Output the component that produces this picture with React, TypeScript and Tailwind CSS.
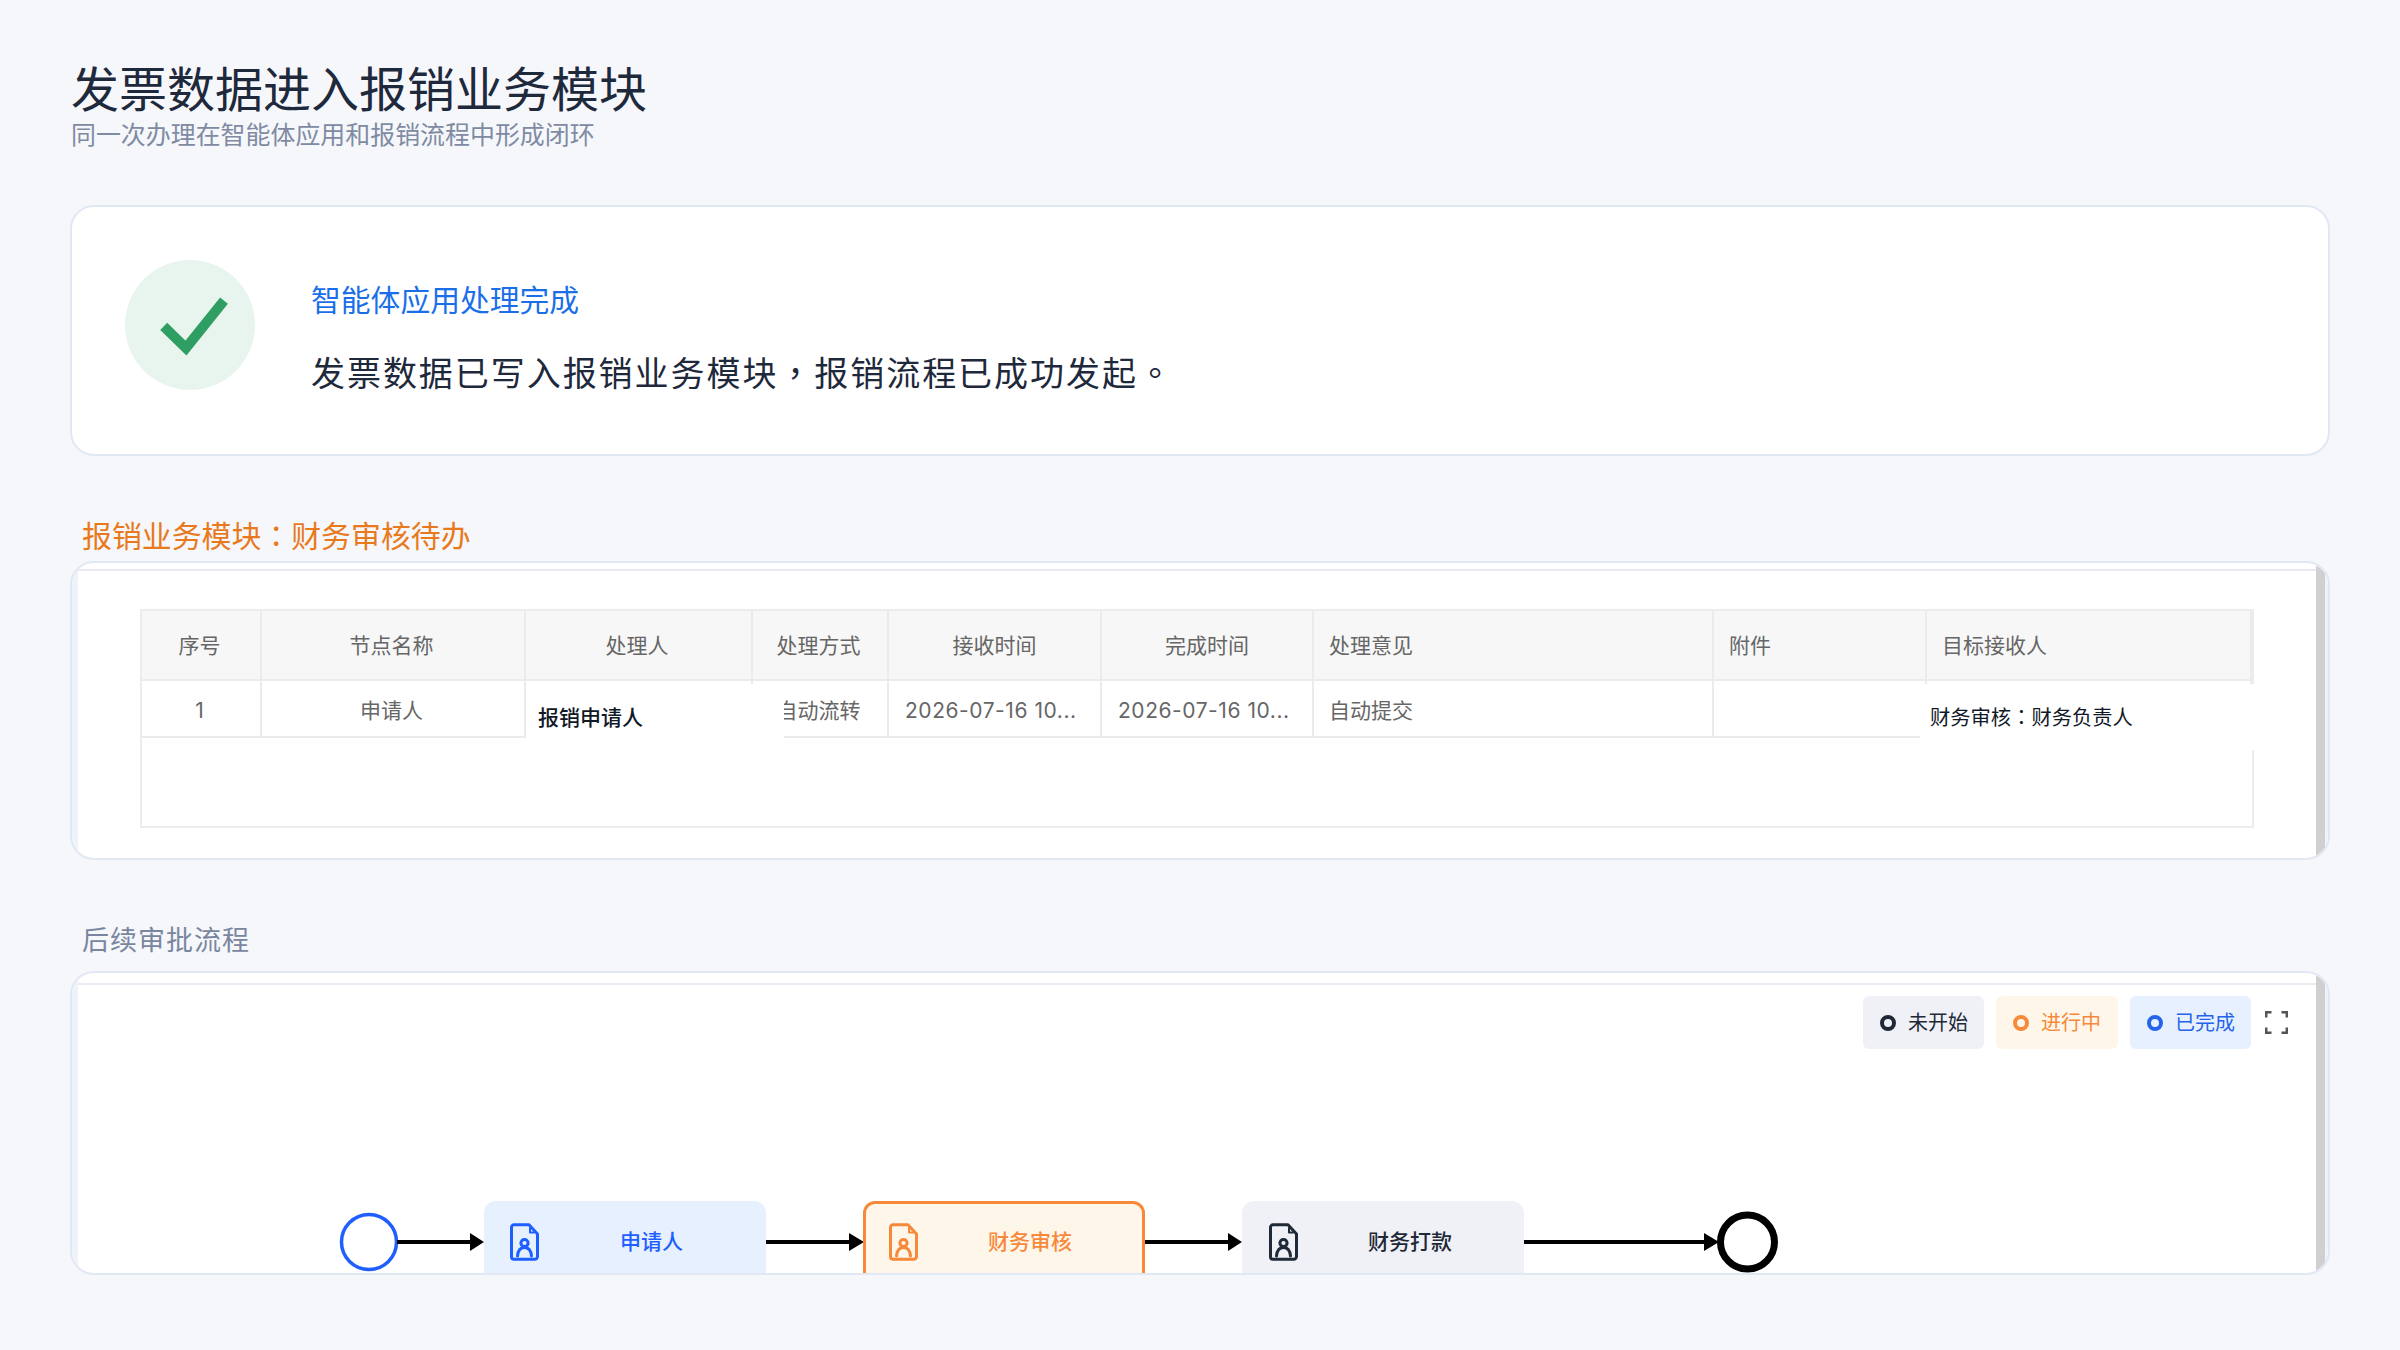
import React from "react";

function FileUser({ className }: { className?: string }) {
  return (
    <svg viewBox="0 0 29 38" className={className} fill="none" stroke="currentColor" strokeWidth="3" strokeLinejoin="round" strokeLinecap="round">
      <path d="M4 1.8 H19 L27.5 11 V33.5 A2.7 2.7 0 0 1 24.8 36.2 H4 A2.5 2.5 0 0 1 1.5 33.7 V4.3 A2.5 2.5 0 0 1 4 1.8 Z" />
      <path d="M20 5 V9.5 H24" strokeWidth="2" />
      <circle cx="14.5" cy="20" r="3.6" />
      <path d="M7.5 33 C8 27.5 10.5 24.5 14.5 24.5 C18.5 24.5 21 27.5 21.5 33" />
    </svg>
  );
}

function Dot({ className }: { className: string }) {
  return <span className={`block w-[16px] h-[16px] rounded-full border-[4px] ${className}`} />;
}

const tc = "font-['Noto_Sans_CJK_TC'] leading-[0]";

export default function App() {
  const th = "border-r-2 border-b-2 border-[#ebebeb] bg-[#f7f7f7] font-normal text-[#666666] text-[21px] h-[70px] p-0 pt-[2px]";
  const td = "border-r-2 border-b-2 border-[#ebebeb] text-[#666666] text-[21px] h-[57px] pt-[5px]";
  return (
    <div className="w-[2400px] h-[1350px] overflow-hidden bg-[#f5f7fb] pl-[70px] pr-[70px] pt-[62px] font-['Inter','Noto_Sans_CJK_SC',sans-serif]">
      <h1 className="pl-[1px] text-[48px] leading-[56px] font-normal text-[#1e293b]">发票数据进入报销业务模块</h1>
      <p className="pl-[1px] text-[24.95px] leading-[32px] mt-[1px] text-[#808ba3]">同一次办理在智能体应用和报销流程中形成闭环</p>

      <section className="mt-[54px] h-[251px] rounded-[24px] border-2 border-[#e0e8f3] bg-white flex items-start pl-[53px] pt-[53px]">
        <div className="w-[130px] h-[130px] rounded-full bg-[#e8f5ee] shrink-0">
          <svg viewBox="0 0 130 130" className="w-[130px] h-[130px]" fill="none">
            <path d="M38.7 66.3 L61 88 L99 40.7" stroke="#2e9e62" strokeWidth="10" strokeLinejoin="miter" />
          </svg>
        </div>
        <div className="ml-[56px] mt-[20px]">
          <div className="text-[29.8px] leading-[40px] text-[#1a6fe8]">智能体应用处理完成</div>
          <div className="mt-[30px] text-[34px] leading-[48px] tracking-[1.95px] text-[#1e293b]">
            发票数据已写入报销业务模块<span className={tc}>，</span>报销流程已成功发起<span className={tc}>。</span>
          </div>
        </div>
      </section>

      <h2 className="mt-[60px] pl-[12px] text-[29.9px] leading-[40px] text-[#e87a1d]">
        报销业务模块<span className={tc}>：</span>财务审核待办
      </h2>
      <section className="mt-[5px] h-[299px] rounded-[24px] border-2 border-[#e0e8f3] bg-white overflow-hidden flex">
        <div className="w-[6px] bg-[#eef2f9] shrink-0" />
        <div className="flex-1 pt-[6px]">
          <div className="border-t-2 border-[#e8ebf1] pl-[62px] pt-[38px]">
            <div className="relative w-[2114px] h-[219px] border-2 border-[#ececec]">
              <table className="table-fixed w-[2110px] border-separate border-spacing-0">
                <colgroup>
                  <col className="w-[120px]" />
                  <col className="w-[264px]" />
                  <col className="w-[227px]" />
                  <col className="w-[136px]" />
                  <col className="w-[213px]" />
                  <col className="w-[212px]" />
                  <col className="w-[400px]" />
                  <col className="w-[213px]" />
                  <col className="w-[325px]" />
                </colgroup>
                <thead>
                  <tr>
                    <th className={`${th} text-center pr-[3px]`}>序号</th>
                    <th className={`${th} text-center pr-[3px]`}>节点名称</th>
                    <th className={`${th} text-center pr-[3px]`}>处理人</th>
                    <th className={`${th} text-center pr-[3px]`}>处理方式</th>
                    <th className={`${th} text-center`}>接收时间</th>
                    <th className={`${th} text-center`}>完成时间</th>
                    <th className={`${th} text-left pl-[15px]`}>处理意见</th>
                    <th className={`${th} text-left pl-[15px]`}>附件</th>
                    <th className={`${th} text-left pl-[15px] border-r-0`}>目标接收人</th>
                  </tr>
                </thead>
                <tbody>
                  <tr>
                    <td className={`${td} text-center pr-[3px]`}>1</td>
                    <td className={`${td} text-center pr-[3px]`}>申请人</td>
                    <td className={td} />
                    <td className={`${td} text-center whitespace-nowrap overflow-hidden pr-[3px]`}>自动流转</td>
                    <td className={`${td} pl-[16px] whitespace-nowrap tracking-[0.55px]`}>2026-07-16 10...</td>
                    <td className={`${td} pl-[16px] whitespace-nowrap tracking-[0.55px]`}>2026-07-16 10...</td>
                    <td className={`${td} pl-[15px]`}>自动提交</td>
                    <td className={td} />
                    <td className={`${td} border-r-0`} />
                  </tr>
                </tbody>
              </table>
              <div className="absolute left-[384px] top-[73px] w-[258px] h-[56px] bg-white pl-[12px] pt-[20px] text-[21px] leading-[28px] font-medium text-[#111827]">报销申请人</div>
              <div className="absolute left-[1778px] top-[73px] w-[336px] h-[66px] bg-white pl-[10px] pt-[20px] text-[20.3px] leading-[28px] font-normal text-[#111827]">
                财务审核<span className={tc}>：</span>财务负责人
              </div>
            </div>
          </div>
        </div>
        <div className="w-[9px] bg-[#d0d0d0] shrink-0" />
        <div className="w-[3px] bg-[#eef2f9] shrink-0" />
      </section>

      <h2 className="mt-[61px] pl-[12px] text-[27px] leading-[40px] tracking-[1px] text-[#7a869f]">后续审批流程</h2>
      <section className="mt-[10px] h-[304px] rounded-[24px] border-2 border-[#e0e8f3] bg-white overflow-hidden flex">
        <div className="w-[6px] bg-[#eef2f9] shrink-0" />
        <div className="flex-1 pt-[10px]">
          <div className="relative h-[290px] border-t-2 border-[#e8ebf1] overflow-hidden">
            <div className="flex justify-end items-center pt-[11px] pr-[28px]">
              <div className="w-[121px] h-[53px] rounded-[6px] bg-[#eff1f6] flex items-center pl-[17px] text-[20px] text-[#1f2937]">
                <Dot className="border-[#1f2937]" />
                <span className="ml-[12px] pt-[1px]">未开始</span>
              </div>
              <div className="ml-[12px] w-[122px] h-[53px] rounded-[6px] bg-[#fff6ea] flex items-center pl-[17px] text-[20px] text-[#f7893b]">
                <Dot className="border-[#f7893b]" />
                <span className="ml-[12px] pt-[1px]">进行中</span>
              </div>
              <div className="ml-[12px] w-[121px] h-[53px] rounded-[6px] bg-[#e7f0ff] flex items-center pl-[17px] text-[20px] text-[#2563eb]">
                <Dot className="border-[#2563eb]" />
                <span className="ml-[12px] pt-[1px]">已完成</span>
              </div>
              <svg viewBox="0 0 23 23" className="ml-[14px] w-[23px] h-[23px]" fill="none" stroke="#555555" strokeWidth="2.5">
                <path d="M1.2 6.5 V1.2 H6.5 M16.5 1.2 H21.8 V6.5 M21.8 16.5 V21.8 H16.5 M6.5 21.8 H1.2 V16.5" />
              </svg>
            </div>

            <svg viewBox="78 985 2238 288" className="absolute left-0 top-0 w-[2238px] h-[288px]" fill="none">
              <circle cx="369" cy="1242" r="27.5" stroke="#1f5eff" strokeWidth="3.5" fill="#ffffff" />
              <circle cx="1747.5" cy="1242" r="27" stroke="#000000" strokeWidth="7" fill="#ffffff" />
              <g stroke="#000000" strokeWidth="4">
                <path d="M397 1242 H472" />
                <path d="M766 1242 H850" />
                <path d="M1145 1242 H1230" />
                <path d="M1524 1242 H1706" />
              </g>
              <g fill="#000000">
                <path d="M470 1233 L484 1242 L470 1251 Z" />
                <path d="M849 1233 L864 1242 L849 1251 Z" />
                <path d="M1228 1233 L1242 1242 L1228 1251 Z" />
                <path d="M1704 1233 L1719 1242 L1704 1251 Z" />
              </g>
            </svg>

            <div className="absolute left-[406px] top-[216px] w-[282px] h-[100px] rounded-[12px] bg-[#e6f0ff] flex items-start pl-[26px] pt-[22px] text-[#1f5eff]">
              <FileUser className="w-[29px] h-[38px] shrink-0" />
              <span className="flex-1 text-center text-[21px] leading-[38px] font-medium pr-[2px]">申请人</span>
            </div>
            <div className="absolute left-[785px] top-[216px] w-[282px] h-[100px] rounded-[12px] border-[3px] border-[#f7893b] bg-[#fff6ea] flex items-start pl-[23px] pt-[19px] text-[#f7893b]">
              <FileUser className="w-[29px] h-[38px] shrink-0" />
              <span className="flex-1 text-center text-[21px] leading-[38px] font-medium">财务审核</span>
            </div>
            <div className="absolute left-[1164px] top-[216px] w-[282px] h-[100px] rounded-[12px] bg-[#eff1f6] flex items-start pl-[27px] pt-[22px] text-[#1f2937]">
              <FileUser className="w-[29px] h-[38px] shrink-0" />
              <span className="flex-1 text-center text-[21px] leading-[38px] font-medium pr-[2px]">财务打款</span>
            </div>
          </div>
        </div>
        <div className="w-[9px] bg-[#d0d0d0] shrink-0" />
        <div className="w-[3px] bg-[#eef2f9] shrink-0" />
      </section>
    </div>
  );
}
